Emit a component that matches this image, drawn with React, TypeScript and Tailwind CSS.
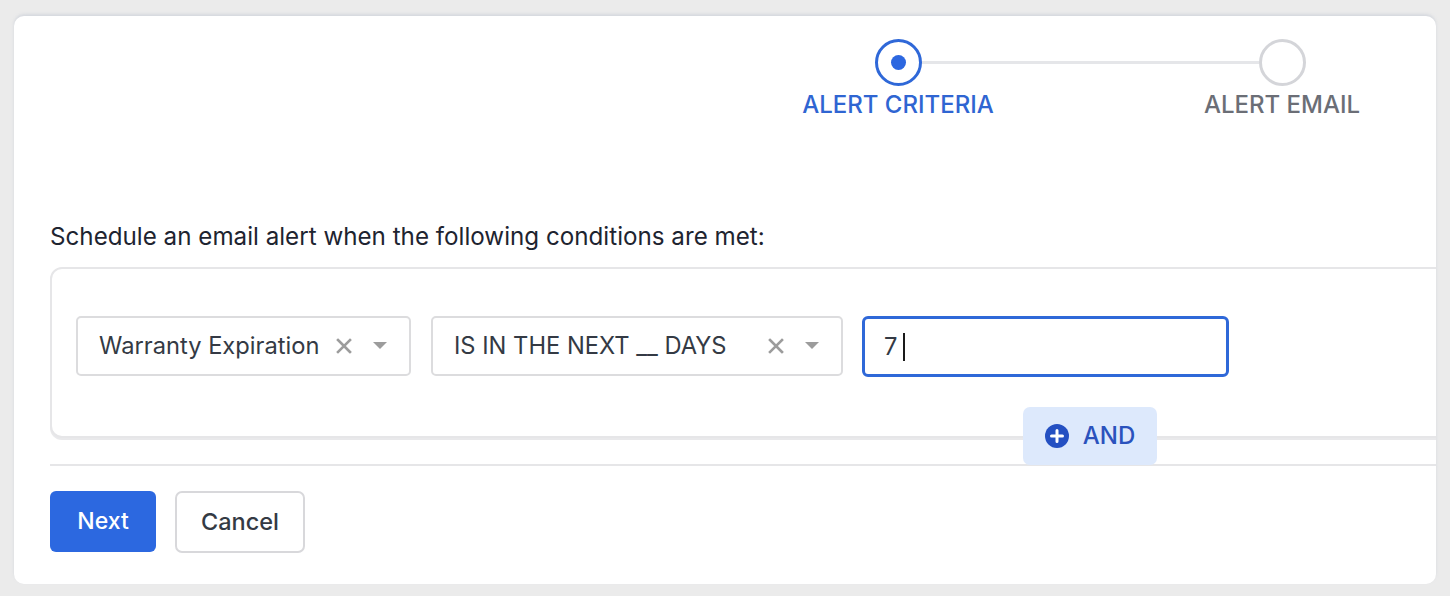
const steps = [
    { label: 'ALERT CRITERIA', active: true },
    { label: 'ALERT EMAIL', active: false },
];

function Stepper() {
    return (
        <div className="flex justify-end pr-[54px]">
            <div className="relative flex gap-[184px]">
                <div className="absolute left-[123px] right-[123px] top-[22px] h-[3px] bg-[#e5e6e9]" />
                {steps.map((step) => (
                    <div key={step.label} className="relative flex w-[200px] flex-col items-center">
                        <div
                            className={
                                step.active
                                    ? 'flex h-[47px] w-[47px] items-center justify-center rounded-full border-[3px] border-[#2f68d8] bg-white'
                                    : 'flex h-[47px] w-[47px] items-center justify-center rounded-full border-[3px] border-[#d4d5d9] bg-white'
                            }
                        >
                            {step.active && <div className="h-[15px] w-[15px] rounded-full bg-[#2c67e0]" />}
                        </div>
                        <span
                            className={
                                step.active
                                    ? 'mt-[4px] whitespace-nowrap text-[24px] font-medium leading-[30px] text-[#2f65d2]'
                                    : 'mt-[4px] whitespace-nowrap text-[24px] font-medium leading-[30px] text-[#6b6e76]'
                            }
                        >
                            {step.label}
                        </span>
                    </div>
                ))}
            </div>
        </div>
    );
}

function Select({ value, width }: { value: string; width: string }) {
    return (
        <div className={`flex h-[60px] ${width} items-center rounded-[5px] border-2 border-[#dcdcde] bg-white pl-[21px] pr-[22px]`}>
            <span className="flex-1 truncate text-[23.7px] text-[#343a44]">{value}</span>
            <svg width="16" height="16" viewBox="0 0 16 16" className="ml-3 text-[#9c9c9c]">
                <path d="M2 2 L14 14 M14 2 L2 14" stroke="currentColor" strokeWidth="2.6" strokeLinecap="square" />
            </svg>
            <svg width="14" height="8" viewBox="0 0 14 8" className="ml-[21px] text-[#9c9c9c]">
                <path d="M0 0 H14 L7 7 Z" fill="currentColor" />
            </svg>
        </div>
    );
}

export default function App() {
    return (
        <div className="min-h-[596px] bg-[#ebebeb] px-[14px] pt-[16px] font-['Inter',sans-serif]">
            <div className="relative overflow-hidden rounded-[10px] bg-white shadow-[0_-2px_3px_rgba(200,205,215,0.6)] pt-[23px] pb-[31px]">
                <Stepper />

                <p className="mt-[102px] pl-9 text-[24.2px] leading-[30px] text-[#1e2430]">
                    Schedule an email alert when the following conditions are met:
                </p>

                <div className="ml-9 mr-[-40px] mt-[15px] relative h-[171px] rounded-[12px] border-2 border-[#e6e6e8] bg-white px-[24px] pt-[47px] shadow-[0_2px_0_#e9e9eb]">
                    <div className="flex gap-5">
                        <Select value="Warranty Expiration" width="w-[335px]" />
                        <Select value="IS IN THE NEXT __ DAYS" width="w-[412px]" />
                        <div className="-ml-px flex h-[61px] w-[367px] items-center rounded-[6px] border-[3px] border-[#2f68d8] bg-white pl-[19px]">
                            <span className="text-[23.7px] text-[#343a44]">7</span>
                            <span className="ml-[6px] h-[28px] w-[2px] bg-[#1a1a1a]" />
                        </div>
                    </div>
                    <button className="absolute left-[971px] top-[138px] flex h-[58px] w-[134px] items-center justify-center gap-[14px] rounded-[7px] bg-[#dde9fc] text-[24px] font-medium text-[#2a52bd]">
                        <svg width="24" height="24" viewBox="0 0 24 24">
                            <circle cx="12" cy="12" r="12" fill="#2450c2" />
                            <path d="M12 6.5 V17.5 M6.5 12 H17.5" stroke="white" strokeWidth="3" strokeLinecap="round" />
                        </svg>
                        AND
                    </button>
                </div>

                <div className="ml-9 mt-[26px] h-[2px] bg-[#e6e6e8]" />

                <div className="mt-[25px] flex gap-[19px] pl-9">
                    <button className="h-[61px] w-[106px] rounded-[6px] bg-[#2c68e0] text-[23px] font-medium text-white">
                        Next
                    </button>
                    <button className="h-[62px] w-[130px] rounded-[7px] border-2 border-[#d8d8db] bg-white text-[23.5px] font-medium text-[#343a44]">
                        Cancel
                    </button>
                </div>
            </div>
        </div>
    );
}
